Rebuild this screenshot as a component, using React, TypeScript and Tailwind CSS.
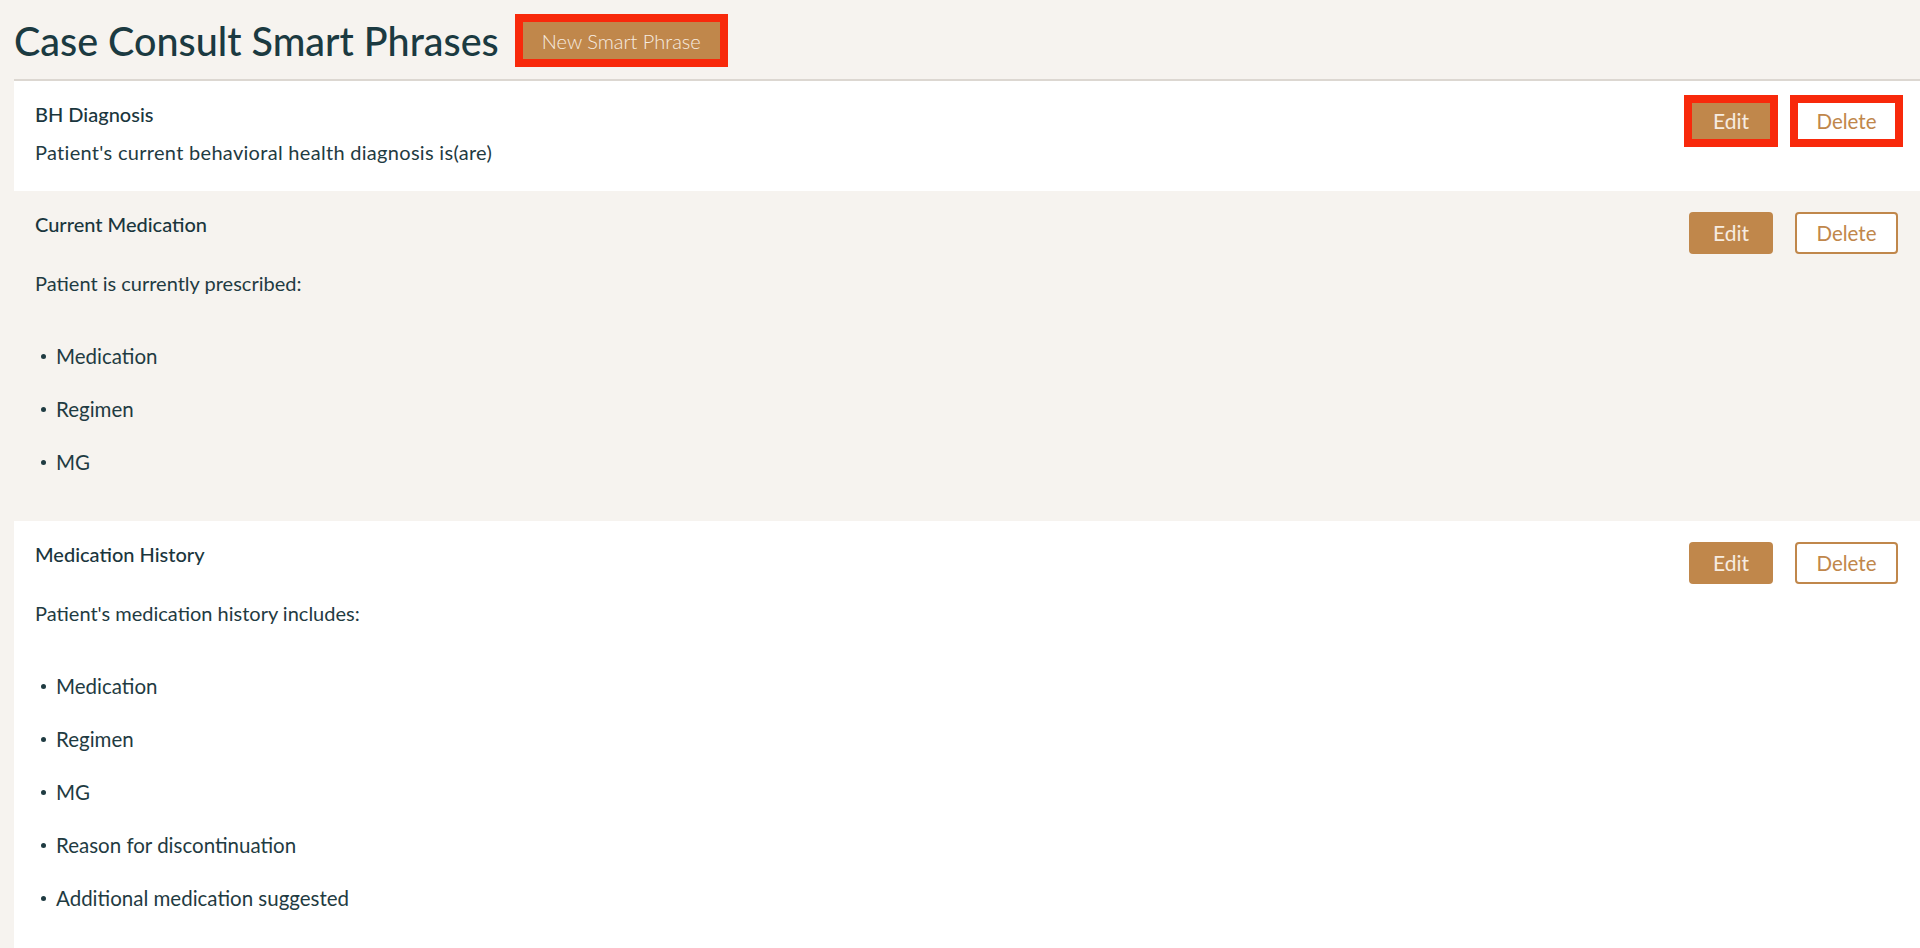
import React from "react";

type Phrase = {
  title: string;
  intro: string;
  items?: string[];
  highlighted?: boolean;
};

const phrases: Phrase[] = [
  {
    title: "BH Diagnosis",
    intro: "Patient's current behavioral health diagnosis is(are)",
    highlighted: true,
  },
  {
    title: "Current Medication",
    intro: "Patient is currently prescribed:",
    items: ["Medication", "Regimen", "MG"],
  },
  {
    title: "Medication History",
    intro: "Patient's medication history includes:",
    items: [
      "Medication",
      "Regimen",
      "MG",
      "Reason for discontinuation",
      "Additional medication suggested",
    ],
  },
];

function Marked({ on, children }: { on?: boolean; children: React.ReactNode }) {
  return (
    <span className="relative inline-flex">
      {children}
      {on && (
        <span className="pointer-events-none absolute -inset-[5px] border-[8px] border-[#f8290b]" />
      )}
    </span>
  );
}

function PhraseCard({ phrase, white }: { phrase: Phrase; white: boolean }) {
  return (
    <div
      className={`flex items-start justify-between pl-[21px] pr-[22px] pt-[21px] ${
        white ? "bg-white" : "bg-[#f6f3ef]"
      } ${phrase.items ? "pb-[46px]" : "pb-[26px]"}`}
    >
      <div className="text-[#1f3b42]">
        <div className="h-[24px] text-[20px] leading-[24px] font-medium text-[#1a363d]">
          {phrase.title}
        </div>
        <p
          className={`text-[20px] leading-[26px] ${
            phrase.items ? "mt-[34px]" : "mt-[13px] tracking-[0.3px]"
          }`}
        >
          {phrase.intro}
        </p>
        {phrase.items && (
          <ul className="mt-[47px] flex flex-col gap-[27px]">
            {phrase.items.map((item) => (
              <li key={item} className="flex items-center text-[20.5px] leading-[26px]">
                <span className="ml-[6px] mr-[10px] h-[5px] w-[5px] rounded-full bg-[#1f3b42]" />
                {item}
              </li>
            ))}
          </ul>
        )}
      </div>
      <div className={`flex items-center gap-[22px] ${phrase.highlighted ? "-mt-[2px] pl-[4px]" : ""}`}>
        <Marked on={phrase.highlighted}>
          <button className="h-[42px] w-[84px] rounded-[4px] bg-[#c0874b] text-[21px] text-[#f7ece0]">
            Edit
          </button>
        </Marked>
        <Marked on={phrase.highlighted}>
          <button className="h-[42px] w-[103px] rounded-[4px] border-2 border-[#c0874b] bg-white text-[20.5px] text-[#c0874b]">
            Delete
          </button>
        </Marked>
      </div>
    </div>
  );
}

export default function App() {
  return (
    <div
      className="min-h-screen bg-[#f6f3ef]"
      style={{ fontFamily: "Lato, 'Noto Sans', sans-serif" }}
    >
      <header className="flex items-center gap-[21px] pl-[14px] pt-[19px] pb-[17px]">
        <h1 className="text-[39.5px] leading-[43px] font-medium text-[#1b3a41]">
          Case Consult Smart Phrases
        </h1>
        <Marked on>
          <button className="h-[43px] px-[22px] bg-[#c0874b] text-[20px] font-light text-[#f7ece0]">
            New Smart Phrase
          </button>
        </Marked>
      </header>
      <div className="ml-[14px] border-t-2 border-[#dcd7d1]">
        {phrases.map((p, i) => (
          <PhraseCard key={p.title} phrase={p} white={i % 2 === 0} />
        ))}
      </div>
    </div>
  );
}
